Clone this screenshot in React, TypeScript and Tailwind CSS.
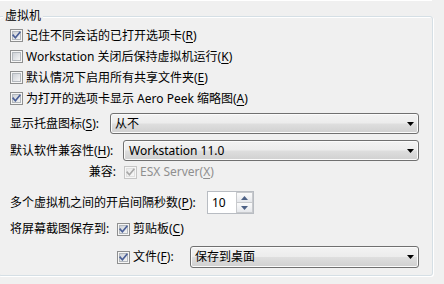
import React from "react";

function Check({ checked, disabled }: { checked?: boolean; disabled?: boolean }) {
  const outer = disabled ? "#c5c5c5" : "#8e8f8f";
  const innerStroke = disabled ? "#e0e0e0" : "#b3b8bd";
  const mark = disabled ? "#a8a8a8" : "#4a5f97";
  return (
    <svg width="13" height="13" viewBox="0 0 13 13" className="shrink-0 block">
      <rect x="0.5" y="0.5" width="12" height="12" fill="#f6f6f6" stroke={outer} />
      <rect x="2.5" y="2.5" width="8" height="8" fill={disabled ? "url(#cbgd)" : "url(#cbg)"} stroke={innerStroke} />
      {checked && (
        <path d="M3.2 6.3 L5.4 8.8 L9.8 3.4" fill="none" stroke={mark} strokeWidth="1.7" strokeLinecap="square" />
      )}
    </svg>
  );
}

function U({ c }: { c: string }) {
  return <span className="underline underline-offset-[2px]">{c}</span>;
}

function CheckRow({ checked, children }: { checked?: boolean; children: React.ReactNode }) {
  return (
    <div className="flex items-center h-[21px] gap-[3px]">
      <Check checked={checked} />
      <span className="whitespace-nowrap">{children}</span>
    </div>
  );
}

function Arrow() {
  return (
    <svg width="7" height="4" viewBox="0 0 7 4" className="block shrink-0">
      <polygon points="0,0 7,0 3.5,4" fill="#000" />
    </svg>
  );
}

function Select({ className, text }: { className: string; text: string }) {
  return (
    <div
      className={
        "flex items-center h-full border border-[#707070] rounded-[3px] pl-[4px] pr-[4px] shadow-[inset_0_0_0_1px_#fbfbfb] bg-[linear-gradient(#f3f3f3_0%,#ececec_48%,#dedede_52%,#d0d0d0_100%)] " +
        className
      }
    >
      <span className="whitespace-nowrap">{text}</span>
      <div className="ml-auto">
        <Arrow />
      </div>
    </div>
  );
}

function Spin() {
  return (
    <div className="flex items-stretch w-[47px] h-full border border-[#b8bcc2] bg-white">
      <div className="flex items-center pl-[4px] flex-1">10</div>
      <div className="flex flex-col w-[17px] border border-[#c8cacd] my-[0px]">
        <div className="flex-1 flex items-center justify-center bg-[linear-gradient(#fbfbfb,#e6e8ec)] border-b border-[#c8cacd]">
          <svg width="7" height="4" viewBox="0 0 7 4" className="block">
            <polygon points="0,4 7,4 3.5,0" fill="#4d6185" />
          </svg>
        </div>
        <div className="flex-1 flex items-center justify-center bg-[linear-gradient(#fbfbfb,#e6e8ec)]">
          <svg width="7" height="4" viewBox="0 0 7 4" className="block">
            <polygon points="0,0 7,0 3.5,4" fill="#4d6185" />
          </svg>
        </div>
      </div>
    </div>
  );
}

export default function App() {
  return (
    <div className="w-[444px] h-[284px] bg-[#f0f0f0] overflow-hidden text-[12px] leading-[16px] text-black font-['Segoe_UI','Noto_Sans','Noto_Sans_CJK_SC',sans-serif]">
      <svg width="0" height="0" className="absolute">
        <defs>
          <linearGradient id="cbg" x1="0" y1="0" x2="1" y2="1">
            <stop offset="0" stopColor="#cbcfd5" />
            <stop offset="1" stopColor="#f7f7f7" />
          </linearGradient>
          <linearGradient id="cbgd" x1="0" y1="0" x2="1" y2="1">
            <stop offset="0" stopColor="#e9e9e9" />
            <stop offset="1" stopColor="#f8f8f8" />
          </linearGradient>
        </defs>
      </svg>
      <div className="h-[1px] w-[432px] bg-white" />
      <div className="h-[15px]" />
      <div className="relative ml-[-2px] w-[435px] h-[260px] border border-[#d5dfe5] rounded-[3px] shadow-[inset_1px_1px_0_#fff,1px_1px_0_#fff] pl-[11px] pt-[8px]">
        <span className="absolute left-[4px] top-[-9px] px-[2px] bg-[#f0f0f0] whitespace-nowrap">虚拟机</span>

        <CheckRow checked>
          记住不同会话的已打开选项卡(<U c="R" />)
        </CheckRow>
        <CheckRow>
          Workstation 关闭后保持虚拟机运行(<U c="K" />)
        </CheckRow>
        <CheckRow>
          默认情况下启用所有共享文件夹(<U c="E" />)
        </CheckRow>
        <CheckRow checked>
          为打开的选项卡显示 Aero Peek 缩略图(<U c="A" />)
        </CheckRow>

        <div className="flex items-center h-[21px] mt-[4px]">
          <span className="w-[100px] whitespace-nowrap">
            显示托盘图标(<U c="S" />):
          </span>
          <Select className="w-[309px]" text="从不" />
        </div>

        <div className="flex items-center h-[21px] mt-[6px]">
          <span className="w-[113px] whitespace-nowrap">
            默认软件兼容性(<U c="H" />):
          </span>
          <Select className="w-[296px] pl-[5px]" text="Workstation 11.0" />
        </div>

        <div className="flex items-center h-[20px] mt-[1px]">
          <span className="w-[106px] text-right whitespace-nowrap">兼容:</span>
          <div className="ml-[8px] flex items-center gap-[3px] text-[#8f8f8f]">
            <Check checked disabled />
            <span className="whitespace-nowrap">
              ESX Server(<U c="X" />)
            </span>
          </div>
        </div>

        <div className="flex items-center h-[23px] mt-[9px]">
          <span className="w-[197px] whitespace-nowrap">
            多个虚拟机之间的开启间隔秒数(<U c="P" />):
          </span>
          <Spin />
        </div>

        <div className="flex items-center h-[20px] mt-[5px]">
          <span className="w-[107px] whitespace-nowrap">将屏幕截图保存到:</span>
          <div className="flex items-center gap-[3px]">
            <Check checked />
            <span className="whitespace-nowrap">
              剪贴板(<U c="C" />)
            </span>
          </div>
        </div>

        <div className="flex items-center h-[22px] mt-[7px]">
          <div className="w-[107px]" />
          <div className="flex items-center gap-[3px] w-[73px]">
            <Check checked />
            <span className="whitespace-nowrap">
              文件(<U c="F" />):
            </span>
          </div>
          <Select className="w-[229px]" text="保存到桌面" />
        </div>
      </div>
    </div>
  );
}
